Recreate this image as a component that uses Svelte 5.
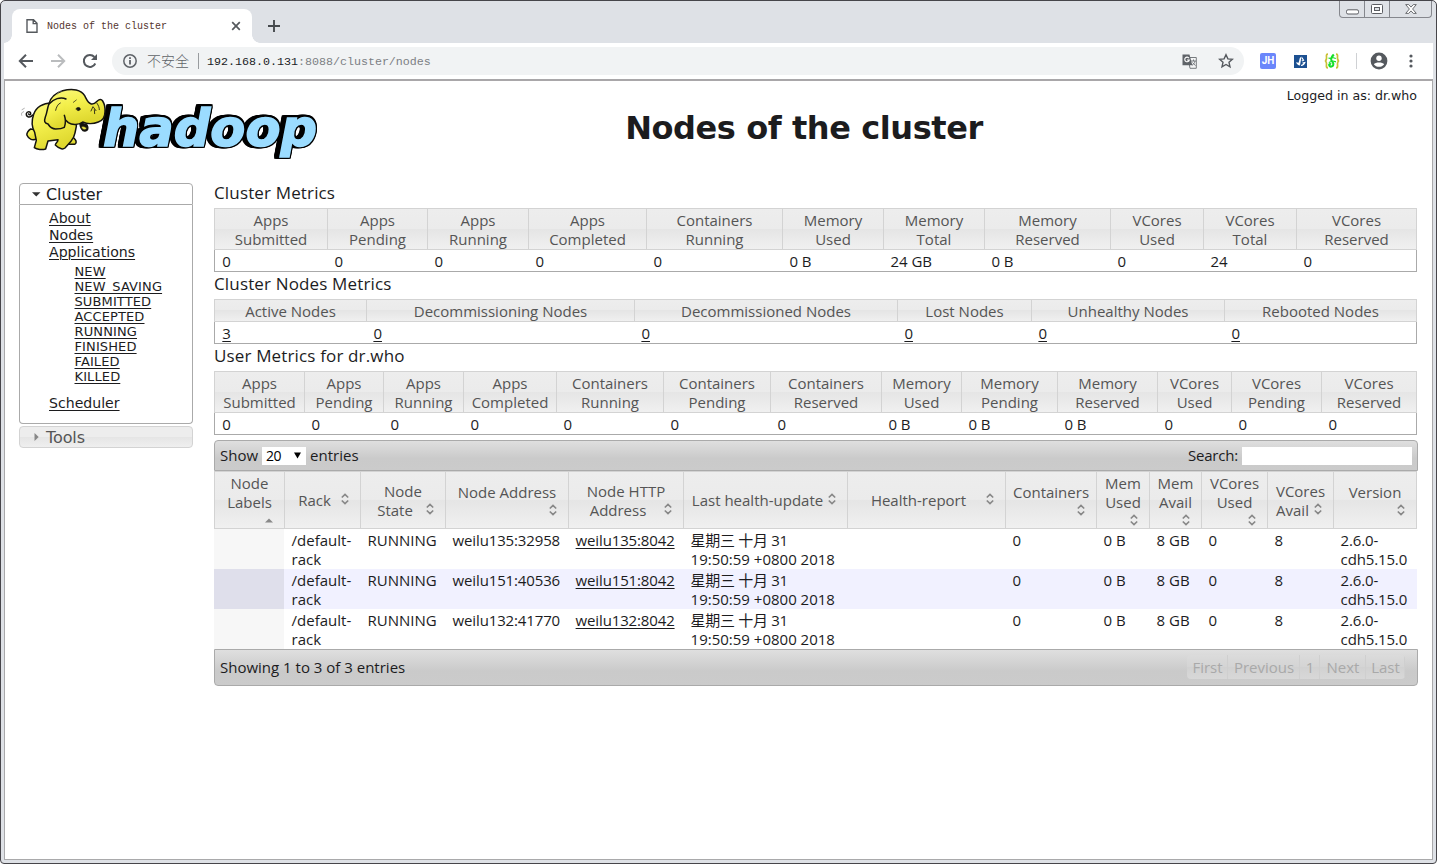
<script>
  const widths = (xs) => xs.slice(1).map((x, i) => x - xs[i]);

  const metrics = [
    {
      title: 'Cluster Metrics',
      cols: widths([214, 327, 427, 528, 646, 782, 883, 984, 1110, 1203, 1296, 1417]),
      heads: ['Apps Submitted', 'Apps Pending', 'Apps Running', 'Apps Completed', 'Containers Running', 'Memory Used', 'Memory Total', 'Memory Reserved', 'VCores Used', 'VCores Total', 'VCores Reserved'],
      split: true,
      cells: ['0', '0', '0', '0', '0', '0 B', '24 GB', '0 B', '0', '24', '0']
    },
    {
      title: 'Cluster Nodes Metrics',
      cols: widths([214, 366, 634, 897, 1031, 1224, 1417]),
      heads: ['Active Nodes', 'Decommissioning Nodes', 'Decommissioned Nodes', 'Lost Nodes', 'Unhealthy Nodes', 'Rebooted Nodes'],
      split: false,
      links: true,
      cells: ['3', '0', '0', '0', '0', '0']
    },
    {
      title: 'User Metrics for dr.who',
      cols: widths([214, 304, 383, 463, 556, 663, 770, 881, 961, 1057, 1157, 1231, 1321, 1417]),
      heads: ['Apps Submitted', 'Apps Pending', 'Apps Running', 'Apps Completed', 'Containers Running', 'Containers Pending', 'Containers Reserved', 'Memory Used', 'Memory Pending', 'Memory Reserved', 'VCores Used', 'VCores Pending', 'VCores Reserved'],
      split: true,
      cells: ['0', '0', '0', '0', '0', '0', '0', '0 B', '0 B', '0 B', '0', '0', '0']
    }
  ];

  const nodeCols = widths([214, 284, 360, 445, 568, 683, 847, 1005, 1096, 1149, 1201, 1267, 1333, 1417]);
  const nodeHeads = [
    { lines: ['Node', 'Labels'], below: true, asc: true },
    { lines: ['Rack'] },
    { lines: ['Node', 'State'] },
    { lines: ['Node Address'], below: true },
    { lines: ['Node HTTP', 'Address'] },
    { lines: ['Last health-update'] },
    { lines: ['Health-report'] },
    { lines: ['Containers'], below: true },
    { lines: ['Mem', 'Used'], below: true },
    { lines: ['Mem', 'Avail'], below: true },
    { lines: ['VCores', 'Used'], below: true },
    { lines: ['VCores', 'Avail'] },
    { lines: ['Version'], below: true }
  ];
  const nodes = [
    ['weilu135:32958', 'weilu135:8042'],
    ['weilu151:40536', 'weilu151:8042'],
    ['weilu132:41770', 'weilu132:8042']
  ];
  const states = ['NEW', 'NEW_SAVING', 'SUBMITTED', 'ACCEPTED', 'RUNNING', 'FINISHED', 'FAILED', 'KILLED'];
</script>

{#snippet sortIcon(asc)}
  <svg class="sort" width="16" height="16" viewBox="0 0 16 16">
    {#if asc}
      <path d="M4 10.500h8L8 6.500z" fill="#888" />
    {:else}
      <path d="M4.800 6.500 8 3.500l3.200 3M4.800 9.500l3.200 3 3.200-3" fill="none" stroke="#888" stroke-width="1.700" />
    {/if}
  </svg>
{/snippet}

<div class="window">
  <header class="tabs">
    <div class="tab">
      <svg width="12" height="14" viewBox="0 0 12 14"><path d="M1 .8h6.500L11 4.300v8.900H1zM7.200 1v3.600H11" fill="none" stroke="#55595d" stroke-width="1.400" /></svg>
      <span class="tab-title">Nodes of the cluster</span>
      <svg width="10" height="10" viewBox="0 0 10 10"><path d="M1.200 1.200l7.600 7.600M8.800 1.200 1.200 8.800" stroke="#55595d" stroke-width="1.700" /></svg>
    </div>
    <svg class="plus" width="12" height="12" viewBox="0 0 12 12"><path d="M6 0v12M0 6h12" stroke="#45494d" stroke-width="1.900" /></svg>
    <div class="controls">
      <span class="wc"><svg width="13" height="6" viewBox="0 0 13 6"><rect x=".5" y=".8" width="12" height="4.200" rx="1.500" fill="#fff" stroke="#5b5d62" /></svg></span>
      <span class="wc mid"><svg width="12" height="10" viewBox="0 0 12 10"><rect x=".5" y=".5" width="11" height="9" rx="1" fill="#fff" stroke="#5b5d62" /><rect x="3.500" y="3.500" width="5" height="3" fill="#dee1e6" stroke="#5b5d62" /></svg></span>
      <span class="wc last"><svg width="12" height="10" viewBox="0 0 12 10"><path d="M.7.6h3L6 3.100 8.300.6h3L7.600 5l3.700 4.400h-3L6 6.900 3.700 9.400h-3L4.400 5z" fill="#fff" stroke="#5b5d62" stroke-width=".9" /></svg></span>
    </div>
  </header>

  <nav class="toolbar">
    <svg width="16" height="16" viewBox="0 0 16 16"><path d="M15 8H2.500M8 1.800 1.800 8 8 14.200" fill="none" stroke="#55595e" stroke-width="2" /></svg>
    <svg width="16" height="16" viewBox="0 0 16 16"><path d="M1 8h12.500M8 1.800 14.200 8 8 14.200" fill="none" stroke="#babcbe" stroke-width="2" /></svg>
    <svg width="16" height="16" viewBox="0 0 16 16"><path d="M13.300 10.500A6 6 0 1 1 12.400 4" fill="none" stroke="#55595e" stroke-width="2" /><path d="M15 1v6H9z" fill="#55595e" /></svg>
    <div class="omnibox">
      <svg width="14" height="14" viewBox="0 0 14 14"><circle cx="7" cy="7" r="6.200" fill="none" stroke="#5f6368" stroke-width="1.500" /><path d="M7 6v4.500M7 3.300v1.700" stroke="#5f6368" stroke-width="1.800" /></svg>
      <span class="insecure">不安全</span>
      <span class="bar"></span>
      <span class="url"><b>192.168.0.131</b>:8088/cluster/nodes</span>
      <svg class="translate" width="15" height="15" viewBox="0 0 15 15"><path d="M6 3.500h8.300v10.800H8z" fill="#f4f5f6" stroke="#777b7f" /><path d="M.5.500h7l2.800 10.800H.5z" fill="#5f6368" /><path d="M7 4.200A2.300 2.300 0 1 0 7.300 6H5" fill="none" stroke="#fff" stroke-width="1.100" /><path d="M9 7h5M11.500 5.500V7M13 7c-.5 2.200-1.800 3.600-3 4.300M10.500 8.500l3 3.200" fill="none" stroke="#777b7f" /></svg>
      <svg class="star" width="16" height="16" viewBox="0 0 16 16"><path d="m8 1.700 1.900 4.200 4.500.4-3.400 3 1 4.500L8 11.500l-4 2.300 1-4.500-3.400-3 4.500-.4z" fill="none" stroke="#55595e" stroke-width="1.400" /></svg>
    </div>
    <div class="exts">
      <span class="jh">JH</span>
      <svg width="13" height="13" viewBox="0 0 13 13"><rect width="13" height="13" fill="#1c5091" /><path d="M7.500 1.500 6 10.500c-1.800-.3-3.300-1.300-4-3.300l2.600.6L5.800 3z" fill="#fff" /><path d="M7.800 2.500 9.500 5.300 7.800 6M7 10.500c1.800-.2 3.200-1.200 3.800-3L8.500 8" fill="none" stroke="#fff" stroke-width="1.200" /></svg>
      <svg class="lizard" width="16" height="16" viewBox="0 0 16 16"><path d="M4 1.200C1.500 1.200 2.800 4 2.500 5.500S1.600 8 .8 8c.8 0 1.500 1 1.700 2.500S1.500 14.800 4 14.800M12 1.200c2.500 0 1.200 2.800 1.500 4.300S14.400 8 15.200 8c-.8 0-1.500 1-1.700 2.500s1 4.300-1.500 4.300" fill="none" stroke="#c9c136" stroke-width="1.700" /><path d="M9.800 1.500C8 3.500 6.700 5 7.300 7c.6 1.800 2.700 2.500 2 4.800-.5 1.800-3 2.700-4 .8-.5-1.300.8-2 1.700-1.200" fill="none" stroke="#15df2a" stroke-width="2.100" /><path d="M4.500 5.200l3 .3M4.800 9.500 8 8.200M8.500 4.500l3.300 1M9 8l3 .8" fill="none" stroke="#15df2a" stroke-width="1.200" /></svg>
      <span class="sep"></span>
      <svg width="18" height="18" viewBox="0 0 18 18"><circle cx="9" cy="9" r="8.400" fill="#55595e" /><circle cx="9" cy="6.300" r="2.700" fill="#fff" /><path d="M3.800 12.300c1.600-2.500 8.800-2.500 10.400 0-2.300 3.400-8.100 3.400-10.400 0z" fill="#fff" /></svg>
      <svg width="4" height="14" viewBox="0 0 4 14"><circle cx="2" cy="2" r="1.600" fill="#55595e" /><circle cx="2" cy="7" r="1.600" fill="#55595e" /><circle cx="2" cy="12" r="1.600" fill="#55595e" /></svg>
    </div>
  </nav>

  <div class="page">
    <div class="banner">
      <svg class="logo" width="306" height="84" viewBox="18 84 306 84">
        <defs>
          <linearGradient id="hide" x1="0" y1="0" x2=".4" y2="1"><stop offset="0" stop-color="#fbf97c" /><stop offset=".5" stop-color="#f3ef4b" /><stop offset="1" stop-color="#dfd82f" /></linearGradient>
        </defs>
        <text class="wordmark" x="103" y="144.500" textLength="214" lengthAdjust="spacingAndGlyphs">hadoop</text>
        <g transform="translate(18 84) scale(.3333)" stroke="#151410" stroke-width="4.500" stroke-linejoin="round" stroke-linecap="round" fill="url(#hide)">
          <path d="M44 90C36 101 24 96 25 86c2-8 13-8 13 0 0 4-5 4-6 1" fill="none" />
          <path d="M38 132c-8 5-13 14-11 19 5 12 17 17 30 10l-4-26z" />
          <path d="M154 144l18 20c4 5 3 12-2 14h-22l-8-26z" />
          <path d="M100 54C76 54 54 66 47 88c-7 20-5 40 3 54l5 24-6 22c8 6 24 7 34 4l7-24 30-4c0 8-8 10-8 16 4 4 9 8 15 10 4 2 10 2 14-1l18-20c5-6 10-13 12-25l4-20V70z" />
          <path d="M185 113c2 13 7 26 16 25 9-1 11-9 6-18z" fill="#17140c" />
          <path d="M190 126c3 9 13 11 16 3-5-4-12-6-16-3z" fill="#eae344" stroke-width="1.500" />
          <path d="M92 58c4-18 20-34 42-41 30-8 56-3 66 15 6 11 9 22 20 25 8 2 12-3 18-9 6-5 12-6 16 0 5 8 8 18 7 32 0 17-6 26-20 31-14 6-34 7-47 0-12 9-31 10-43 2-12-10-24-30-26-50z" />
          <path d="M146 43c-16-8-40-1-52 15-6 9-6 24-12 38-4 11-3 19 8 21 8 10 17 17 29 15 8-1 17-1 22-5 5-12 3-25-1-36 2-20 3-35 6-48z" stroke="none" />
          <path d="M144 42c-16-8-38 0-51 15-5 9-5 25-11 39-4 12-3 19 8 21 5 8 13 15 23 15s19-1 26-5c5-13 4-25 0-36" fill="none" />
          <path d="M127 54c-8 3-12 13-14 22" fill="none" stroke-width="2.500" />
          <path d="M166 52l9-7M174 71c3-4 8-5 12-2l1 5-6 3z" fill="#151410" stroke-width="2" />
          <path d="M219 78l6-13 9 12M230 86l-1-12M237 55c5 7 7 13 7 19" fill="none" stroke-width="2.500" />
          <path d="M118 28c1-6 6-10 13-10M17 80c-6 1-8 6-6 11M12 74l7-4" fill="none" stroke="#888" stroke-width="2" />
        </g>
      </svg>
      <h1>Nodes of the cluster</h1>
      <div class="user">Logged in as: dr.who</div>
    </div>

    <div class="body">
      <aside>
        <div class="acc open"><svg width="9" height="5" viewBox="0 0 9 5"><path d="M0 .3h8.500L4.250 4.500z" fill="#333" /></svg>Cluster</div>
        <div class="panel">
          <ul class="links">
            <li><a href="#about">About</a></li>
            <li><a href="#nodes">Nodes</a></li>
            <li><a href="#apps">Applications</a>
              <ul class="sub">
                {#each states as s}<li><a href="#{s}">{s}</a></li>{/each}
              </ul>
            </li>
            <li><a href="#scheduler">Scheduler</a></li>
          </ul>
        </div>
        <div class="acc closed"><svg width="9" height="8" viewBox="0 0 9 8"><path d="M2.500 0v8L6.700 4z" fill="#888" /></svg>Tools</div>
      </aside>

      <main>
        {#each metrics as m}
          <h3>{m.title}</h3>
          <table class="metrics">
            <colgroup>{#each m.cols as w}<col style="width:{w}px" />{/each}</colgroup>
            <thead><tr>
              {#each m.heads as h}
                <th>{#if m.split}{h.split(' ')[0]}<br />{h.split(' ')[1]}{:else}{h}{/if}</th>
              {/each}
            </tr></thead>
            <tbody><tr>
              {#each m.cells as c}<td>{#if m.links}<a href="#n">{c}</a>{:else}{c}{/if}</td>{/each}
            </tr></tbody>
          </table>
        {/each}

        <section class="grid">
          <div class="strip top">
            <span>Show</span>
            <span class="select">20<svg width="7" height="7" viewBox="0 0 7 7"><path d="M0 .5h7L3.500 6.500z" fill="#000" /></svg></span>
            <span>entries</span>
            <span class="search">Search:</span>
            <span class="input"></span>
          </div>
          <table class="nodes">
            <colgroup>{#each nodeCols as w}<col style="width:{w}px" />{/each}</colgroup>
            <thead><tr>
              {#each nodeHeads as h}
                <th>
                  <div class="head" class:two={h.lines.length > 1}>
                    {#each h.lines as l, i}
                      <div class="line"><span>{l}</span>{#if !h.below && i === h.lines.length - 1}{@render sortIcon(h.asc)}{/if}</div>
                    {/each}
                    {#if h.below}<div class="iconline">{@render sortIcon(h.asc)}</div>{/if}
                  </div>
                </th>
              {/each}
            </tr></thead>
            <tbody>
              {#each nodes as [addr, http]}
                <tr>
                  <td></td>
                  <td>/default-<br />rack</td>
                  <td>RUNNING</td>
                  <td class="addr">{addr}</td>
                  <td class="addr"><a href="#http">{http}</a></td>
                  <td><span class="date">星期三 十月 31</span><br />19:50:59 +0800 2018</td>
                  <td></td>
                  <td>0</td>
                  <td>0 B</td>
                  <td>8 GB</td>
                  <td>0</td>
                  <td>8</td>
                  <td class="addr">2.6.0-<br />cdh5.15.0</td>
                </tr>
              {/each}
            </tbody>
          </table>
          <div class="strip bottom">
            <span>Showing 1 to 3 of 3 entries</span>
            <div class="pager">
              <span style="width:41px">First</span><span style="width:72px">Previous</span><span style="width:20px">1</span><span style="width:46px">Next</span><span style="width:39px">Last</span>
            </div>
          </div>
        </section>
      </main>
    </div>
  </div>
</div>

<style>
  :global(body) { margin: 0; background: #fff; }
  * { box-sizing: border-box; }
  svg { flex: none; display: block; }
  a { color: inherit; text-decoration: underline; text-underline-offset: 2px; text-decoration-thickness: 1px; }
  .window {
    width: 1437px; height: 864px; padding: 0 3px 3px; display: flex; flex-direction: column; overflow: hidden;
    background: #dee1e6; border: 1px solid #46454a; border-radius: 5px 5px 4px 4px;
  }
  .tabs { height: 42px; display: flex; align-items: flex-end; padding-left: 8px; flex: none; }
  .tab {
    position: relative; width: 240px; height: 34px; border-radius: 8px 8px 0 0; background: #fff;
    display: flex; align-items: center; padding: 0 11px 0 14px;
  }
  .tab::before, .tab::after { content: ''; position: absolute; bottom: 0; width: 8px; height: 8px; }
  .tab::before { left: -8px; background: radial-gradient(circle at 0 0, transparent 7.500px, #fff 8px); }
  .tab::after { right: -8px; background: radial-gradient(circle at 100% 0, transparent 7.500px, #fff 8px); }
  .tab-title { flex: 1; margin: 2px 0 0 9px; font: 10px/14px "Liberation Mono", monospace; color: #54352e; white-space: nowrap; }
  .plus { margin: 0 0 11px 16px; }
  .controls { margin: 0 1px 0 auto; align-self: flex-start; display: flex; height: 17px; border: 1px solid #85878d; border-top: 0; border-radius: 0 0 4px 4px; }
  .wc { width: 24px; display: grid; place-items: center; }
  .wc:first-child svg { margin-top: 6px; }
  .wc.mid { width: 26px; border: solid #85878d; border-width: 0 1px; }
  .wc.last { width: 41px; }

  .toolbar { height: 36px; flex: none; background: #fff; display: flex; align-items: center; padding-left: 14px; gap: 16px; }
  .omnibox { width: 1132px; height: 28px; margin-left: -2px; border-radius: 14px; background: #f1f3f4; display: flex; align-items: center; padding: 0 10px 0 11px; }
  .insecure { font: 14px/20px "Noto Sans CJK SC", sans-serif; color: #5f6368; margin: -2px 0 0 10px; font-weight: 300; }
  .bar { width: 1px; height: 16px; background: #999c9f; margin: 0 8px 0 9px; }
  .url { font: 11.667px/16px "Liberation Mono", monospace; color: #7c8084; margin-top: 2px; }
  .url b { font-weight: 400; color: #202124; }
  .translate { margin-left: auto; }
  .star { margin-left: 21px; }
  .exts { display: flex; align-items: center; }
  .jh { width: 16px; height: 16px; border-radius: 2px; background: #6a86fb; color: #fff; font: 700 10px/16px Roboto, sans-serif; text-align: center; margin-right: 18px; }
  .exts .lizard { margin-left: 17px; }
  .sep { width: 1px; height: 16px; background: #cfd1d4; margin: 0 13px 0 16px; }
  .exts svg:last-child { margin-left: 21px; }

  .page { flex: 1; background: #fff; border: 1px solid #a9a9ab; border-top: 2px solid #a9a7a9; color: #1c1c1e; padding: 0 15px 0 14px; min-height: 0; }
  .banner { display: grid; grid-template-columns: 300px 1fr 128px; height: 102px; font-family: "DejaVu Sans", sans-serif; }
  .logo { margin: 4px 0 0 -1px; overflow: visible; }
  .wordmark {
    font: italic 700 51px "DejaVu Sans", sans-serif; fill: #9bdcff; stroke: #9bdcff; stroke-width: 1.500px; stroke-linejoin: miter;
    filter: drop-shadow(1.500px 0 0 #000) drop-shadow(0 1.800px 0 #000) drop-shadow(0 -1.500px 0 #000) drop-shadow(-2.500px 0 0 #000) drop-shadow(-2px 0 0 #000);
  }
  h1 { margin: 27px 0 0; font-size: 32px; line-height: 40px; letter-spacing: -.42px; text-align: center; color: #1c1c1e; }
  .user { display: flex; justify-content: flex-end; white-space: nowrap; font-size: 12.600px; line-height: 16px; padding-top: 7px; }
  .body { display: grid; grid-template-columns: 174px 1204px; column-gap: 21px; }

  aside { font-family: "DejaVu Sans", sans-serif; }
  .acc { height: 22px; display: flex; align-items: center; gap: 5px; padding: 2px 0 0 12px; font-size: 16px; line-height: 18px; border: 1px solid #aaa; letter-spacing: -.1px; }
  .acc svg { margin-top: -2px; }
  .open { border-radius: 4px 4px 0 0; }
  .closed { margin-top: 2px; border-color: #d3d3d3; border-radius: 4px; color: #555; background: linear-gradient(#ededed 50%, #e5e5e5 51%, #efefef); }
  .panel { height: 219px; border: 1px solid #aaa; border-top: 0; border-radius: 0 0 4px 4px; padding: 5px 0 0 29px; }
  ul { list-style: none; margin: 0; padding: 0; }
  .links { font-size: 14.100px; line-height: 17px; }
  .sub { font-size: 13px; line-height: 15px; padding: 3px 0 11px 25.500px; letter-spacing: .12px; }

  main { font: 15px/19px "Open Sans", "Noto Sans CJK SC", sans-serif; }
  h3 { margin: 0; font-size: 17px; font-weight: 400; line-height: 20px; height: 25px; letter-spacing: .15px; }
  .metrics + h3 { height: 27px; padding-top: 2px; }
  table { table-layout: fixed; width: 1203px; border-spacing: 0; }
  th, td { padding: 0; }
  th { font-weight: 400; color: #555; border: solid #d3d3d3; border-width: 1px 0 1px 1px; background: linear-gradient(#ededed, #ebebeb 49%, #e5e5e5 50%, #f0f0f0); }
  th:last-child { border-right-width: 1px; }
  .metrics th { padding: 2px 0 0; }
  .metrics { border-bottom: 1px solid #aaa; }
  .metrics td { padding: 2px 0 0 7.400px; height: 21px; }
  .metrics td:first-child { border-left: 1px solid #aaa; padding-left: 7.300px; }
  .metrics td:last-child { border-right: 1px solid #aaa; }

  .grid { margin-top: 5px; width: 1204px; }
  .strip { display: flex; align-items: center; border: 1px solid #aaa; padding: 0 5px; background: linear-gradient(#dfdfdf, #cacaca 60%, #cbcbcb); }
  .top { height: 31px; border-radius: 4px 4px 0 0; }
  .bottom { height: 37px; border-radius: 0 0 4px 4px; }
  .select { width: 44px; height: 18px; margin: 0 4px 0 4px; padding: 0 5px 0 4px; background: #fff; color: #000; font-size: 14px; line-height: 18px; letter-spacing: -.5px; display: flex; align-items: center; justify-content: space-between; }
  .search { margin-left: auto; letter-spacing: -.2px; }
  .input { width: 170px; height: 18px; background: #fff; margin-left: 4px; }
  .nodes th { height: 58px; }
  .head { padding: 0 7px 0 7px; }
  .head.two { padding-top: 2px; }
  .line { height: 19px; display: flex; white-space: nowrap; }
  .line span { flex: 1; text-align: center; min-width: 0; display: flex; justify-content: center; }
  .iconline { height: 16px; display: flex; justify-content: flex-end; }
  .nodes td { height: 40px; padding: 2px 0 0 7.600px; vertical-align: top; white-space: nowrap; }
  .addr { letter-spacing: -.14px; }
  .date { letter-spacing: -.3px; }
  .nodes td:first-child { background: #f7f7f7; }
  .nodes tbody tr:nth-child(2) { background: #f1f1ff; }
  .nodes tbody tr:nth-child(2) td:first-child { background: #dfdfeb; }
  .pager { margin: -1px 7px 0 auto; display: flex; height: 24px; border-radius: 4px; overflow: hidden; color: #a9a9a9; line-height: 25px; background: linear-gradient(#dbdbdb, #d4d4d4 49%, #d1d1d1 50%, #d8d8d8); }
  .pager span { text-align: center; border-right: 1px solid #cfcfcf; padding-left: 1px; }
</style>
